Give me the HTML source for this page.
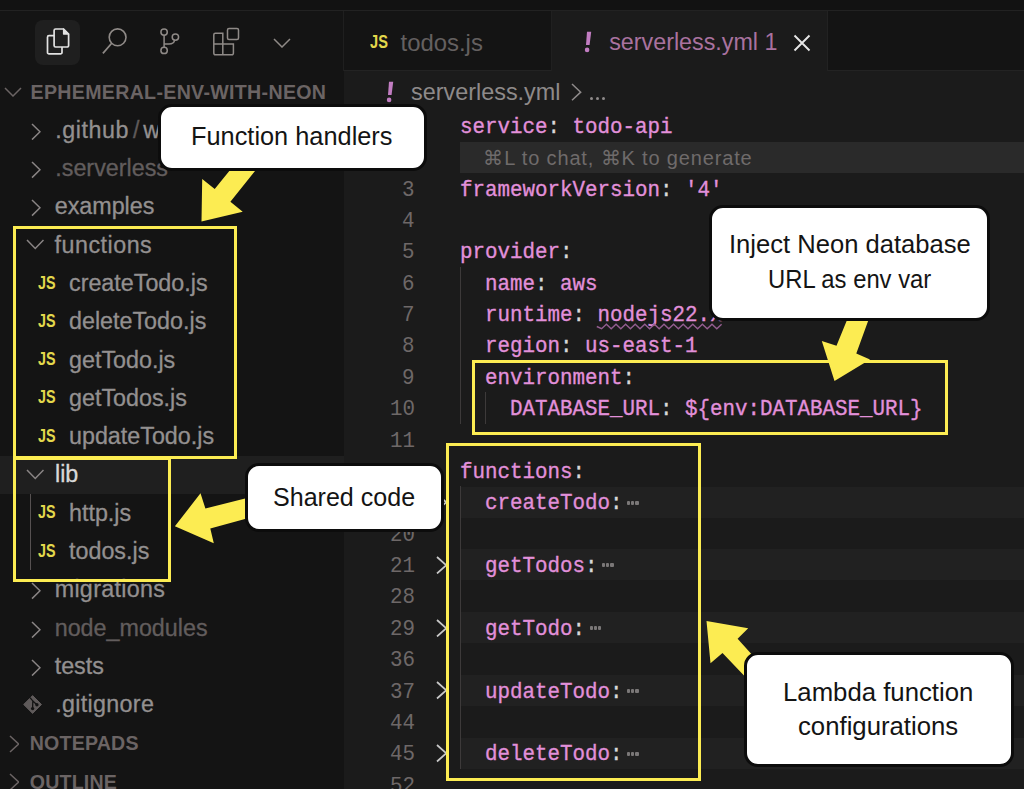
<!DOCTYPE html>
<html><head><meta charset="utf-8">
<style>
*{margin:0;padding:0;box-sizing:border-box}
html,body{width:1024px;height:789px;overflow:hidden;background:#121212;font-family:"Liberation Sans",sans-serif}
.a{position:absolute}
.t{position:absolute;white-space:pre;line-height:1}
</style></head><body>
<div class="a" style="left:0;top:10px;width:1024px;height:1px;background:#222"></div>
<div class="a" style="left:0;top:11px;width:344px;height:778px;background:#141414"></div>
<div class="a" style="left:344px;top:11px;width:680px;height:60px;background:#141414"></div>
<div class="a" style="left:343px;top:11px;width:1px;height:60px;background:#1f1f1f"></div>
<div class="a" style="left:344px;top:70.4px;width:680px;height:1px;background:#232323"></div>
<div class="a" style="left:344px;top:71px;width:680px;height:718px;background:#1b1b1b"></div>
<div class="a" style="left:551px;top:11px;width:276.5px;height:61px;background:#1b1b1b"></div>
<div class="a" style="left:550.8px;top:11px;width:1px;height:60px;background:#202020"></div>
<div class="a" style="left:827.2px;top:11px;width:1px;height:60px;background:#222"></div>
<div class="a" style="left:35.2px;top:19.5px;width:45.3px;height:45.3px;background:#1f1f1f;border-radius:8px"></div>
<svg class="a" style="left:44px;top:26px" width="30" height="32" viewBox="0 0 30 32">
<path d="M10.1 9.7 H5 a1.5 1.5 0 0 0 -1.5 1.5 V26.4 a1.5 1.5 0 0 0 1.5 1.5 H16.5 a1.5 1.5 0 0 0 1.5 -1.5 V21" fill="none" stroke="#e2e2e2" stroke-width="1.7"/>
<path d="M11.6 3 H19.5 L24.6 8.1 V19.5 a1.5 1.5 0 0 1 -1.5 1.5 H11.6 a1.5 1.5 0 0 1 -1.5 -1.5 V4.5 a1.5 1.5 0 0 1 1.5 -1.5 Z" fill="none" stroke="#e2e2e2" stroke-width="1.7" stroke-linejoin="round"/>
<path d="M19.5 3 V8.1 H24.6 Z" fill="#e2e2e2" stroke="#e2e2e2" stroke-width="1.2" stroke-linejoin="round"/>
</svg>
<svg class="a" style="left:100px;top:26px" width="30" height="30" viewBox="0 0 30 30">
<circle cx="17.6" cy="11.3" r="8.4" fill="none" stroke="#8f8a87" stroke-width="1.6"/>
<line x1="11.7" y1="17.2" x2="2.9" y2="27.4" stroke="#8f8a87" stroke-width="1.7"/>
</svg>
<svg class="a" style="left:155px;top:25px" width="26" height="32" viewBox="0 0 26 32">
<circle cx="9.1" cy="7.1" r="3.2" fill="none" stroke="#8f8a87" stroke-width="1.5"/>
<circle cx="9.1" cy="25.4" r="3.2" fill="none" stroke="#8f8a87" stroke-width="1.5"/>
<circle cx="20.4" cy="12.1" r="3.2" fill="none" stroke="#8f8a87" stroke-width="1.5"/>
<line x1="9.1" y1="10.3" x2="9.1" y2="22.2" stroke="#8f8a87" stroke-width="1.5"/>
<path d="M9.1 19 H14 Q19 19 19.6 15.2" fill="none" stroke="#8f8a87" stroke-width="1.5"/>
</svg>
<svg class="a" style="left:210px;top:26px" width="32" height="32" viewBox="0 0 32 32">
<path d="M3.8 18 V8.8 a1.5 1.5 0 0 1 1.5 -1.5 H12.8 V18 H23.4 V27.3 a1.5 1.5 0 0 1 -1.5 1.5 H5.3 a1.5 1.5 0 0 1 -1.5 -1.5 Z M3.8 18 H12.8 V28.8" fill="none" stroke="#8f8a87" stroke-width="1.5"/>
<rect x="17.5" y="2.6" width="11" height="11" rx="1.5" fill="none" stroke="#8f8a87" stroke-width="1.5"/>
</svg>
<svg class="a" style="left:272.8px;top:38.0px" width="18" height="10" viewBox="-1 -1 18 10"><polyline points="0,0 8.0,8 16,0" fill="none" stroke="#8f8a87" stroke-width="1.5"/></svg>
<svg class="a" style="left:4px;top:87.3px" width="18" height="10" viewBox="-1 -1 18 10"><polyline points="0,0 8.0,8 16,0" fill="none" stroke="#6b6464" stroke-width="1.5"/></svg>
<div class="t" style="left:30.5px;top:83.24px;font-size:19.6px;font-weight:700;color:#6b6464;letter-spacing:0.32px">EPHEMERAL-ENV-WITH-NEON</div>
<div class="a" style="left:0;top:455.5px;width:344px;height:38px;background:#1f1f1f"></div>
<div class="a" style="left:29.8px;top:493.5px;width:1.4px;height:76px;background:#565151"></div>
<svg class="a" style="left:31.2px;top:122.89999999999999px" width="10" height="17.6" viewBox="-1 -1 10 17.6"><polyline points="0,0 8,7.8 0,15.6" fill="none" stroke="#8a8585" stroke-width="1.5"/></svg>
<div class="t" style="left:55.3px;top:118.89px;font-size:23.3px;color:#939090;-webkit-text-stroke:0.3px currentColor"><span style="letter-spacing:0.55px">.github</span><span style="color:#5f5a5a;word-spacing:-2.6px"> / </span>workflows</div>
<svg class="a" style="left:31.2px;top:161.17999999999998px" width="10" height="17.6" viewBox="-1 -1 10 17.6"><polyline points="0,0 8,7.8 0,15.6" fill="none" stroke="#8a8585" stroke-width="1.5"/></svg>
<div class="t" style="left:55.3px;top:157.17px;font-size:23.3px;color:#625d5d;-webkit-text-stroke:0.3px currentColor">.serverless</div>
<svg class="a" style="left:31.2px;top:199.45999999999998px" width="10" height="17.6" viewBox="-1 -1 10 17.6"><polyline points="0,0 8,7.8 0,15.6" fill="none" stroke="#8a8585" stroke-width="1.5"/></svg>
<div class="t" style="left:54.7px;top:195.45px;font-size:23.3px;color:#939090;-webkit-text-stroke:0.3px currentColor">examples</div>
<svg class="a" style="left:25.8px;top:239.39000000000001px" width="18.5" height="10.5" viewBox="-1 -1 18.5 10.5"><polyline points="0,0 8.25,8.5 16.5,0" fill="none" stroke="#8a8585" stroke-width="1.5"/></svg>
<div class="t" style="left:54.5px;top:233.73px;font-size:23.3px;color:#939090;-webkit-text-stroke:0.3px currentColor"><span style="letter-spacing:0.5px">functions</span></div>
<div class="t" style="left:37.5px;top:273.56px;font-size:18.3px;font-weight:700;color:#e3d84c;transform:scaleX(0.785);transform-origin:0 0">JS</div>
<div class="t" style="left:69px;top:272.01px;font-size:23.3px;color:#939090;-webkit-text-stroke:0.3px currentColor">createTodo.js</div>
<div class="t" style="left:37.5px;top:311.84px;font-size:18.3px;font-weight:700;color:#e3d84c;transform:scaleX(0.785);transform-origin:0 0">JS</div>
<div class="t" style="left:69px;top:310.29px;font-size:23.3px;color:#939090;-webkit-text-stroke:0.3px currentColor">deleteTodo.js</div>
<div class="t" style="left:37.5px;top:350.12px;font-size:18.3px;font-weight:700;color:#e3d84c;transform:scaleX(0.785);transform-origin:0 0">JS</div>
<div class="t" style="left:69px;top:348.57px;font-size:23.3px;color:#939090;-webkit-text-stroke:0.3px currentColor">getTodo.js</div>
<div class="t" style="left:37.5px;top:388.41px;font-size:18.3px;font-weight:700;color:#e3d84c;transform:scaleX(0.785);transform-origin:0 0">JS</div>
<div class="t" style="left:69px;top:386.86px;font-size:23.3px;color:#939090;-webkit-text-stroke:0.3px currentColor">getTodos.js</div>
<div class="t" style="left:37.5px;top:426.69px;font-size:18.3px;font-weight:700;color:#e3d84c;transform:scaleX(0.785);transform-origin:0 0">JS</div>
<div class="t" style="left:69px;top:425.13px;font-size:23.3px;color:#939090;-webkit-text-stroke:0.3px currentColor">updateTodo.js</div>
<svg class="a" style="left:25.8px;top:469.07px" width="18.5" height="10.5" viewBox="-1 -1 18.5 10.5"><polyline points="0,0 8.25,8.5 16.5,0" fill="none" stroke="#8a8585" stroke-width="1.5"/></svg>
<div class="t" style="left:55px;top:463.41px;font-size:23.3px;color:#d8d8d8;-webkit-text-stroke:0.3px currentColor">lib</div>
<div class="t" style="left:37.5px;top:503.24px;font-size:18.3px;font-weight:700;color:#e3d84c;transform:scaleX(0.785);transform-origin:0 0">JS</div>
<div class="t" style="left:69px;top:501.69px;font-size:23.3px;color:#939090;-webkit-text-stroke:0.3px currentColor">http.js</div>
<div class="t" style="left:37.5px;top:541.53px;font-size:18.3px;font-weight:700;color:#e3d84c;transform:scaleX(0.785);transform-origin:0 0">JS</div>
<div class="t" style="left:69px;top:539.98px;font-size:23.3px;color:#939090;-webkit-text-stroke:0.3px currentColor">todos.js</div>
<svg class="a" style="left:31.2px;top:582.2600000000001px" width="10" height="17.6" viewBox="-1 -1 10 17.6"><polyline points="0,0 8,7.8 0,15.6" fill="none" stroke="#8a8585" stroke-width="1.5"/></svg>
<div class="t" style="left:54.7px;top:578.26px;font-size:23.3px;color:#939090;-webkit-text-stroke:0.3px currentColor"><span style="letter-spacing:0.3px">migrations</span></div>
<svg class="a" style="left:31.2px;top:620.5400000000001px" width="10" height="17.6" viewBox="-1 -1 10 17.6"><polyline points="0,0 8,7.8 0,15.6" fill="none" stroke="#8a8585" stroke-width="1.5"/></svg>
<div class="t" style="left:54.7px;top:616.54px;font-size:23.3px;color:#625d5d;-webkit-text-stroke:0.3px currentColor">node_modules</div>
<svg class="a" style="left:31.2px;top:658.8200000000002px" width="10" height="17.6" viewBox="-1 -1 10 17.6"><polyline points="0,0 8,7.8 0,15.6" fill="none" stroke="#8a8585" stroke-width="1.5"/></svg>
<div class="t" style="left:54.7px;top:654.82px;font-size:23.3px;color:#939090;-webkit-text-stroke:0.3px currentColor">tests</div>
<svg class="a" style="left:22px;top:694.1px" width="22" height="22" viewBox="0 0 22 22">
<path d="M10.6 1.6 L19.5 10.5 L10.6 19.4 L1.7 10.5 Z" fill="#5f5a5a" stroke="#5f5a5a" stroke-width="1" stroke-linejoin="round"/>
<path d="M8 3.6 L10.8 6.9 L10.6 14.6 M10.8 6.9 L14.9 10.7" fill="none" stroke="#141414" stroke-width="1.3"/>
<circle cx="10.6" cy="14.6" r="1.7" fill="#141414"/><circle cx="14.9" cy="10.7" r="1.7" fill="#141414"/>
</svg>
<div class="t" style="left:55.3px;top:693.10px;font-size:23.3px;color:#939090;-webkit-text-stroke:0.3px currentColor"><span style="letter-spacing:0.3px">.gitignore</span></div>
<svg class="a" style="left:8.6px;top:734.6800000000001px" width="10.6" height="18" viewBox="-1 -1 10.6 18"><polyline points="0,0 8.6,8.0 0,16" fill="none" stroke="#6b6464" stroke-width="1.5"/></svg>
<div class="t" style="left:29.7px;top:734.22px;font-size:19.6px;font-weight:700;color:#6b6464;letter-spacing:0.2px">NOTEPADS</div>
<svg class="a" style="left:8.6px;top:772.96px" width="10.6" height="18" viewBox="-1 -1 10.6 18"><polyline points="0,0 8.6,8.0 0,16" fill="none" stroke="#6b6464" stroke-width="1.5"/></svg>
<div class="t" style="left:29.7px;top:772.50px;font-size:19.6px;font-weight:700;color:#6b6464;letter-spacing:0.2px">OUTLINE</div>
<div class="t" style="left:370.3px;top:32.77px;font-size:18.5px;font-weight:700;color:#e3d84c;transform:scaleX(0.79);transform-origin:0 0">JS</div>
<div class="t" style="left:400.5px;top:30.69px;font-size:23.9px;color:#646060">todos.js</div>
<svg class="a" style="left:584px;top:31px" width="12" height="24" viewBox="0 0 12 24">
<path d="M3 0.8 L7.2 0.8 L5.6 14 L2 14 Z" fill="#c27dc2"/>
<circle cx="3.1" cy="18.9" r="2.3" fill="#c27dc2"/></svg>
<div class="t" style="left:609.2px;top:31.40px;font-size:23.3px;color:#a9729f">serverless.yml 1</div>
<svg class="a" style="left:793px;top:33.5px" width="18" height="18" viewBox="0 0 18 18">
<path d="M1.5 1.5 L16.5 16.5 M16.5 1.5 L1.5 16.5" stroke="#e6e6e6" stroke-width="1.9"/></svg>
<svg class="a" style="left:385.8px;top:81px" width="12" height="24" viewBox="0 0 12 24">
<path d="M3 0.8 L7.2 0.8 L5.6 14 L2 14 Z" fill="#c27dc2"/>
<circle cx="3.1" cy="18.9" r="2.3" fill="#c27dc2"/></svg>
<div class="t" style="left:411px;top:80.71px;font-size:23.4px;color:#8e8a8a">serverless.yml</div>
<svg class="a" style="left:570.9px;top:83.35px" width="10.7" height="18.3" viewBox="-1 -1 10.7 18.3"><polyline points="0,0 8.7,8.15 0,16.3" fill="none" stroke="#8e8a8a" stroke-width="1.5"/></svg>
<div class="a" style="left:590.10px;top:96.9px;width:3.2px;height:3.2px;border-radius:50%;background:#8e8a8a"></div>
<div class="a" style="left:595.80px;top:96.9px;width:3.2px;height:3.2px;border-radius:50%;background:#8e8a8a"></div>
<div class="a" style="left:601.60px;top:96.9px;width:3.2px;height:3.2px;border-radius:50%;background:#8e8a8a"></div>
<div class="a" style="left:461px;top:486.64px;width:563px;height:31px;background:#212121"></div>
<div class="a" style="left:461px;top:549.38px;width:563px;height:31px;background:#212121"></div>
<div class="a" style="left:461px;top:612.12px;width:563px;height:31px;background:#212121"></div>
<div class="a" style="left:461px;top:674.86px;width:563px;height:31px;background:#212121"></div>
<div class="a" style="left:461px;top:737.60px;width:563px;height:31px;background:#212121"></div>
<div class="a" style="left:460px;top:142.2px;width:564px;height:30.5px;background:#2a2a2a"></div>
<div class="t" style="left:483.3px;top:147.60px;font-size:20px;letter-spacing:0.85px;color:#6f6b6b">⌘L to chat, ⌘K to generate</div>
<div class="a" style="left:460px;top:266.85px;width:1.2px;height:156.85px;background:#3d3a3a"></div>
<div class="a" style="left:485.2px;top:392.33px;width:1.2px;height:31.37px;background:#3d3a3a"></div>
<div class="a" style="left:460px;top:486.44px;width:1.2px;height:282.33px;background:#3d3a3a"></div>
<div class="t" style="left:460.2px;top:115.87px;font-family:'Liberation Mono',monospace;font-size:22.8px;transform:scaleX(0.9137);transform-origin:0 0;-webkit-text-stroke:0.35px currentColor"><span style="color:#e290da">service</span><span style="color:#d8d8d8">:</span> <span style="color:#e290da">todo-api</span></div>
<div class="t" style="left:460.2px;top:178.61px;font-family:'Liberation Mono',monospace;font-size:22.8px;transform:scaleX(0.9137);transform-origin:0 0;-webkit-text-stroke:0.35px currentColor"><span style="color:#e290da">frameworkVersion</span><span style="color:#d8d8d8">:</span> <span style="color:#e290da">'4'</span></div>
<div class="t" style="left:460.2px;top:241.35px;font-family:'Liberation Mono',monospace;font-size:22.8px;transform:scaleX(0.9137);transform-origin:0 0;-webkit-text-stroke:0.35px currentColor"><span style="color:#e290da">provider</span><span style="color:#d8d8d8">:</span></div>
<div class="t" style="left:460.2px;top:272.72px;font-family:'Liberation Mono',monospace;font-size:22.8px;transform:scaleX(0.9137);transform-origin:0 0;-webkit-text-stroke:0.35px currentColor">  <span style="color:#e290da">name</span><span style="color:#d8d8d8">:</span> <span style="color:#e290da">aws</span></div>
<div class="t" style="left:460.2px;top:304.09px;font-family:'Liberation Mono',monospace;font-size:22.8px;transform:scaleX(0.9137);transform-origin:0 0;-webkit-text-stroke:0.35px currentColor">  <span style="color:#e290da">runtime</span><span style="color:#d8d8d8">:</span> <span style="color:#e290da">nodejs22.x</span></div>
<div class="t" style="left:460.2px;top:335.46px;font-family:'Liberation Mono',monospace;font-size:22.8px;transform:scaleX(0.9137);transform-origin:0 0;-webkit-text-stroke:0.35px currentColor">  <span style="color:#e290da">region</span><span style="color:#d8d8d8">:</span> <span style="color:#e290da">us-east-1</span></div>
<div class="t" style="left:460.2px;top:366.83px;font-family:'Liberation Mono',monospace;font-size:22.8px;transform:scaleX(0.9137);transform-origin:0 0;-webkit-text-stroke:0.35px currentColor">  <span style="color:#e290da">environment</span><span style="color:#d8d8d8">:</span></div>
<div class="t" style="left:460.2px;top:398.20px;font-family:'Liberation Mono',monospace;font-size:22.8px;transform:scaleX(0.9137);transform-origin:0 0;-webkit-text-stroke:0.35px currentColor">    <span style="color:#e290da">DATABASE_URL</span><span style="color:#d8d8d8">:</span> <span style="color:#e290da">${env:DATABASE_URL}</span></div>
<div class="t" style="left:460.2px;top:460.94px;font-family:'Liberation Mono',monospace;font-size:22.8px;transform:scaleX(0.9137);transform-origin:0 0;-webkit-text-stroke:0.35px currentColor"><span style="color:#e290da">functions</span><span style="color:#d8d8d8">:</span></div>
<div class="t" style="left:460.2px;top:492.31px;font-family:'Liberation Mono',monospace;font-size:22.8px;transform:scaleX(0.9137);transform-origin:0 0;-webkit-text-stroke:0.35px currentColor">  <span style="color:#e290da">createTodo</span><span style="color:#d8d8d8">:</span></div>
<div class="t" style="left:460.2px;top:555.05px;font-family:'Liberation Mono',monospace;font-size:22.8px;transform:scaleX(0.9137);transform-origin:0 0;-webkit-text-stroke:0.35px currentColor">  <span style="color:#e290da">getTodos</span><span style="color:#d8d8d8">:</span></div>
<div class="t" style="left:460.2px;top:617.79px;font-family:'Liberation Mono',monospace;font-size:22.8px;transform:scaleX(0.9137);transform-origin:0 0;-webkit-text-stroke:0.35px currentColor">  <span style="color:#e290da">getTodo</span><span style="color:#d8d8d8">:</span></div>
<div class="t" style="left:460.2px;top:680.53px;font-family:'Liberation Mono',monospace;font-size:22.8px;transform:scaleX(0.9137);transform-origin:0 0;-webkit-text-stroke:0.35px currentColor">  <span style="color:#e290da">updateTodo</span><span style="color:#d8d8d8">:</span></div>
<div class="t" style="left:460.2px;top:743.27px;font-family:'Liberation Mono',monospace;font-size:22.8px;transform:scaleX(0.9137);transform-origin:0 0;-webkit-text-stroke:0.35px currentColor">  <span style="color:#e290da">deleteTodo</span><span style="color:#d8d8d8">:</span></div>
<div class="a" style="left:627.00px;top:500.54px;width:3.2px;height:4px;border-radius:1px;background:#7a7777"></div>
<div class="a" style="left:631.20px;top:500.54px;width:3.2px;height:4px;border-radius:1px;background:#7a7777"></div>
<div class="a" style="left:635.40px;top:500.54px;width:3.2px;height:4px;border-radius:1px;background:#7a7777"></div>
<div class="a" style="left:602.00px;top:563.28px;width:3.2px;height:4px;border-radius:1px;background:#7a7777"></div>
<div class="a" style="left:606.20px;top:563.28px;width:3.2px;height:4px;border-radius:1px;background:#7a7777"></div>
<div class="a" style="left:610.40px;top:563.28px;width:3.2px;height:4px;border-radius:1px;background:#7a7777"></div>
<div class="a" style="left:589.50px;top:626.02px;width:3.2px;height:4px;border-radius:1px;background:#7a7777"></div>
<div class="a" style="left:593.70px;top:626.02px;width:3.2px;height:4px;border-radius:1px;background:#7a7777"></div>
<div class="a" style="left:597.90px;top:626.02px;width:3.2px;height:4px;border-radius:1px;background:#7a7777"></div>
<div class="a" style="left:627.00px;top:688.76px;width:3.2px;height:4px;border-radius:1px;background:#7a7777"></div>
<div class="a" style="left:631.20px;top:688.76px;width:3.2px;height:4px;border-radius:1px;background:#7a7777"></div>
<div class="a" style="left:635.40px;top:688.76px;width:3.2px;height:4px;border-radius:1px;background:#7a7777"></div>
<div class="a" style="left:627.00px;top:751.50px;width:3.2px;height:4px;border-radius:1px;background:#7a7777"></div>
<div class="a" style="left:631.20px;top:751.50px;width:3.2px;height:4px;border-radius:1px;background:#7a7777"></div>
<div class="a" style="left:635.40px;top:751.50px;width:3.2px;height:4px;border-radius:1px;background:#7a7777"></div>
<svg class="a" style="left:0;top:0" width="1024" height="789"><path d="M596.8 326.5 L601.6 328.7 L606.4 324.3 L611.2 328.7 L616.0 324.3 L620.8 328.7 L625.6 324.3 L630.4 328.7 L635.2 324.3 L640.0 328.7 L644.8 324.3 L649.6 328.7 L654.4 324.3 L659.2 328.7 L664.0 324.3 L668.8 328.7 L673.6 324.3 L678.4 328.7 L683.2 324.3 L688.0 328.7 L692.8 324.3 L697.6 328.7 L702.4 324.3 L707.2 328.7 L712.0 324.3 L716.8 328.7 L721.6 324.3" fill="none" stroke="#935d90" stroke-width="1.4"/></svg>
<div class="t" style="left:402.00px;top:178.61px;font-family:'Liberation Mono',monospace;font-size:22.8px;color:#6e6868;transform:scaleX(0.9137);transform-origin:0 0">3</div>
<div class="t" style="left:402.00px;top:209.98px;font-family:'Liberation Mono',monospace;font-size:22.8px;color:#6e6868;transform:scaleX(0.9137);transform-origin:0 0">4</div>
<div class="t" style="left:402.00px;top:241.35px;font-family:'Liberation Mono',monospace;font-size:22.8px;color:#6e6868;transform:scaleX(0.9137);transform-origin:0 0">5</div>
<div class="t" style="left:402.00px;top:272.72px;font-family:'Liberation Mono',monospace;font-size:22.8px;color:#6e6868;transform:scaleX(0.9137);transform-origin:0 0">6</div>
<div class="t" style="left:402.00px;top:304.09px;font-family:'Liberation Mono',monospace;font-size:22.8px;color:#6e6868;transform:scaleX(0.9137);transform-origin:0 0">7</div>
<div class="t" style="left:402.00px;top:335.46px;font-family:'Liberation Mono',monospace;font-size:22.8px;color:#6e6868;transform:scaleX(0.9137);transform-origin:0 0">8</div>
<div class="t" style="left:402.00px;top:366.83px;font-family:'Liberation Mono',monospace;font-size:22.8px;color:#6e6868;transform:scaleX(0.9137);transform-origin:0 0">9</div>
<div class="t" style="left:389.50px;top:398.20px;font-family:'Liberation Mono',monospace;font-size:22.8px;color:#6e6868;transform:scaleX(0.9137);transform-origin:0 0">10</div>
<div class="t" style="left:389.50px;top:429.57px;font-family:'Liberation Mono',monospace;font-size:22.8px;color:#6e6868;transform:scaleX(0.9137);transform-origin:0 0">11</div>
<div class="t" style="left:389.50px;top:460.94px;font-family:'Liberation Mono',monospace;font-size:22.8px;color:#6e6868;transform:scaleX(0.9137);transform-origin:0 0">12</div>
<div class="t" style="left:389.50px;top:492.31px;font-family:'Liberation Mono',monospace;font-size:22.8px;color:#6e6868;transform:scaleX(0.9137);transform-origin:0 0">13</div>
<div class="t" style="left:389.50px;top:523.68px;font-family:'Liberation Mono',monospace;font-size:22.8px;color:#6e6868;transform:scaleX(0.9137);transform-origin:0 0">20</div>
<div class="t" style="left:389.50px;top:555.05px;font-family:'Liberation Mono',monospace;font-size:22.8px;color:#6e6868;transform:scaleX(0.9137);transform-origin:0 0">21</div>
<div class="t" style="left:389.50px;top:586.42px;font-family:'Liberation Mono',monospace;font-size:22.8px;color:#6e6868;transform:scaleX(0.9137);transform-origin:0 0">28</div>
<div class="t" style="left:389.50px;top:617.79px;font-family:'Liberation Mono',monospace;font-size:22.8px;color:#6e6868;transform:scaleX(0.9137);transform-origin:0 0">29</div>
<div class="t" style="left:389.50px;top:649.16px;font-family:'Liberation Mono',monospace;font-size:22.8px;color:#6e6868;transform:scaleX(0.9137);transform-origin:0 0">36</div>
<div class="t" style="left:389.50px;top:680.53px;font-family:'Liberation Mono',monospace;font-size:22.8px;color:#6e6868;transform:scaleX(0.9137);transform-origin:0 0">37</div>
<div class="t" style="left:389.50px;top:711.90px;font-family:'Liberation Mono',monospace;font-size:22.8px;color:#6e6868;transform:scaleX(0.9137);transform-origin:0 0">44</div>
<div class="t" style="left:389.50px;top:743.27px;font-family:'Liberation Mono',monospace;font-size:22.8px;color:#6e6868;transform:scaleX(0.9137);transform-origin:0 0">45</div>
<div class="t" style="left:389.50px;top:774.64px;font-family:'Liberation Mono',monospace;font-size:22.8px;color:#6e6868;transform:scaleX(0.9137);transform-origin:0 0">52</div>
<svg class="a" style="left:435.8px;top:493.09px" width="11.3" height="18.5" viewBox="-1 -1 11.3 18.5"><polyline points="0,0 9.3,8.25 0,16.5" fill="none" stroke="#c8c8c8" stroke-width="1.7"/></svg>
<svg class="a" style="left:435.8px;top:555.83px" width="11.3" height="18.5" viewBox="-1 -1 11.3 18.5"><polyline points="0,0 9.3,8.25 0,16.5" fill="none" stroke="#c8c8c8" stroke-width="1.7"/></svg>
<svg class="a" style="left:435.8px;top:618.57px" width="11.3" height="18.5" viewBox="-1 -1 11.3 18.5"><polyline points="0,0 9.3,8.25 0,16.5" fill="none" stroke="#c8c8c8" stroke-width="1.7"/></svg>
<svg class="a" style="left:435.8px;top:681.3100000000001px" width="11.3" height="18.5" viewBox="-1 -1 11.3 18.5"><polyline points="0,0 9.3,8.25 0,16.5" fill="none" stroke="#c8c8c8" stroke-width="1.7"/></svg>
<svg class="a" style="left:435.8px;top:744.0500000000001px" width="11.3" height="18.5" viewBox="-1 -1 11.3 18.5"><polyline points="0,0 9.3,8.25 0,16.5" fill="none" stroke="#c8c8c8" stroke-width="1.7"/></svg>
<div class="a" style="left:13px;top:225.8px;width:223.70px;height:233.50px;border:3.5px solid #fcec52"></div>
<div class="a" style="left:13.3px;top:456.5px;width:157.50px;height:125.20px;border:3.5px solid #fcec52"></div>
<div class="a" style="left:471.8px;top:360.3px;width:476.60px;height:74.50px;border:3.5px solid #fcec52"></div>
<div class="a" style="left:446px;top:442.7px;width:255.30px;height:338.30px;border:3.5px solid #fcec52"></div>
<svg class="a" style="left:0;top:0" width="1024" height="789"><polygon points="238.2,160.0 263.7,160.0 230.4,201.7 242.7,211.8 201.5,221.4 202.2,179.0 214.7,188.9" fill="#fcec52"/><polygon points="851.1,310.0 872.1,310.0 856.3,353.6 870.0,359.5 834.5,381.0 821.8,340.9 836.5,345.7" fill="#fcec52"/><polygon points="255.0,496.1 205.4,508.4 200.5,493.3 174.9,526.3 213.8,543.2 210.3,528.4 255.0,516.3" fill="#fcec52"/><polygon points="706.5,621.1 748.2,628.2 737.6,638.8 765.2,669.4 755.9,687.9 722.5,653.0 710.5,663.2" fill="#fcec52"/></svg>
<div class="a" style="left:157.6px;top:103.8px;width:269.40px;height:66.80px;background:#fff;border:3.5px solid #0c0c0c;border-radius:14px"></div><div class="t" style="left:190.90px;top:122.88px;font-size:26.5px;color:#141414;transform:scaleX(0.9564);transform-origin:0 0">Function handlers</div>
<div class="a" style="left:708.8px;top:204.7px;width:280.90px;height:116.10px;background:#fff;border:3.5px solid #0c0c0c;border-radius:14px"></div><div class="t" style="left:728.50px;top:231.47px;font-size:26.5px;color:#141414;transform:scaleX(0.9655);transform-origin:0 0">Inject Neon database</div><div class="t" style="left:767.50px;top:266.38px;font-size:26.5px;color:#141414;transform:scaleX(0.8986);transform-origin:0 0">URL as env var</div>
<div class="a" style="left:244.6px;top:462.9px;width:199.90px;height:69.60px;background:#fff;border:3.5px solid #0c0c0c;border-radius:14px"></div><div class="t" style="left:272.70px;top:484.18px;font-size:26.5px;color:#141414;transform:scaleX(0.9453);transform-origin:0 0">Shared code</div>
<div class="a" style="left:743.8px;top:651.5px;width:270.70px;height:115.50px;background:#fff;border:3.5px solid #0c0c0c;border-radius:14px"></div><div class="t" style="left:783.40px;top:679.27px;font-size:26.5px;color:#141414;transform:scaleX(0.9715);transform-origin:0 0">Lambda function</div><div class="t" style="left:798.10px;top:712.88px;font-size:26.5px;color:#141414;transform:scaleX(0.971);transform-origin:0 0">configurations</div>
</body></html>
